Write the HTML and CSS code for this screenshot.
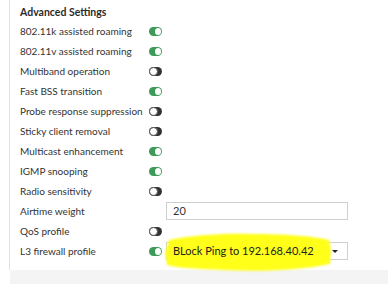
FILE: index.html
```html
<!DOCTYPE html>
<html lang="en">
<head>
    <meta charset="UTF-8">
    <title>Advanced Settings</title>
    <link rel="stylesheet" href="styles.css">
</head>
<body>
    <div class="panel">
        <h3 class="title">Advanced Settings</h3>

        <div class="row"><span class="label">802.11k assisted roaming</span><span class="toggle on"></span></div>
        <div class="row"><span class="label">802.11v assisted roaming</span><span class="toggle on"></span></div>
        <div class="row"><span class="label">Multiband operation</span><span class="toggle"></span></div>
        <div class="row"><span class="label">Fast BSS transition</span><span class="toggle on"></span></div>
        <div class="row"><span class="label">Probe response suppression</span><span class="toggle"></span></div>
        <div class="row"><span class="label">Sticky client removal</span><span class="toggle"></span></div>
        <div class="row"><span class="label">Multicast enhancement</span><span class="toggle on"></span></div>
        <div class="row"><span class="label">IGMP snooping</span><span class="toggle on"></span></div>
        <div class="row"><span class="label">Radio sensitivity</span><span class="toggle"></span></div>
        <div class="row"><span class="label">Airtime weight</span><span class="spacer"></span><span class="field">20</span></div>
        <div class="row"><span class="label">QoS profile</span><span class="toggle"></span></div>
        <div class="row">
            <span class="label">L3 firewall profile</span><span class="toggle on"></span>
            <span class="field select">
                <svg class="marker" width="176" height="42" viewBox="0 0 176 42">
                    <path d="M6 9 C30 4 60 2 90 3 C120 3 150 5 166 9 L168 20 L167 33 C140 39 100 41 60 39 C35 38 15 37 4 34 L2 22 Z" fill="#ffff1a"/>
                </svg>
                <span class="value">BLock Ping to 192.168.40.42</span>
                <span class="caret"></span>
            </span>
        </div>
    </div>
    <div class="footer"></div>
</body>
</html>
```

FILE: styles.css
```css
body {
    margin: 0;
    padding: 0;
    background-color: #ffffff;
    font-family: Lato, "Open Sans", sans-serif;
    font-size: 10px;
    color: #333333;
    width: 388px;
    height: 284px;
    overflow: hidden;
}

.panel {
    margin-left: 9px;
    border-left: 1px solid #e2e2e2;
    padding: 4px 0 0 10px;
    height: 266px;
}

.title {
    margin: 0;
    height: 17px;
    line-height: 17px;
    font-size: 10.5px;
    font-weight: bold;
    color: #2a2a2a;
}

.row {
    display: flex;
    align-items: center;
    height: 20px;
}

.label {
    width: 129px;
    white-space: nowrap;
}

.toggle {
    position: relative;
    width: 13px;
    height: 9px;
    border-radius: 5px;
    background-color: #333333;
    box-sizing: border-box;
}

.toggle::after {
    content: "";
    position: absolute;
    left: 0;
    top: 0;
    width: 9px;
    height: 9px;
    border-radius: 50%;
    background-color: #ffffff;
    border: 1px solid #555555;
    box-sizing: border-box;
}

.toggle.on {
    background-color: #3d9a57;
}

.toggle.on::after {
    left: 6px;
    width: 6px;
    height: 7px;
    top: 1px;
    border: none;
}

.spacer {
    width: 13px;
}

.field {
    position: relative;
    margin-left: 4px;
    width: 182px;
    height: 18px;
    line-height: 16px;
    border: 1px solid #cfcfcf;
    box-sizing: border-box;
    padding-left: 6px;
    background-color: #ffffff;
    font-size: 11px;
}

.select {
    display: flex;
    align-items: center;
}

.marker {
    position: absolute;
    left: -4px;
    top: -12px;
    filter: blur(1.2px);
}

.value {
    position: relative;
    color: #222222;
}

.caret {
    position: absolute;
    right: 9px;
    top: 7px;
    width: 0;
    height: 0;
    border-left: 3px solid transparent;
    border-right: 3px solid transparent;
    border-top: 3px solid #222222;
}

.footer {
    margin-left: 10px;
    height: 18px;
    background-color: #f4f4f4;
}
```
